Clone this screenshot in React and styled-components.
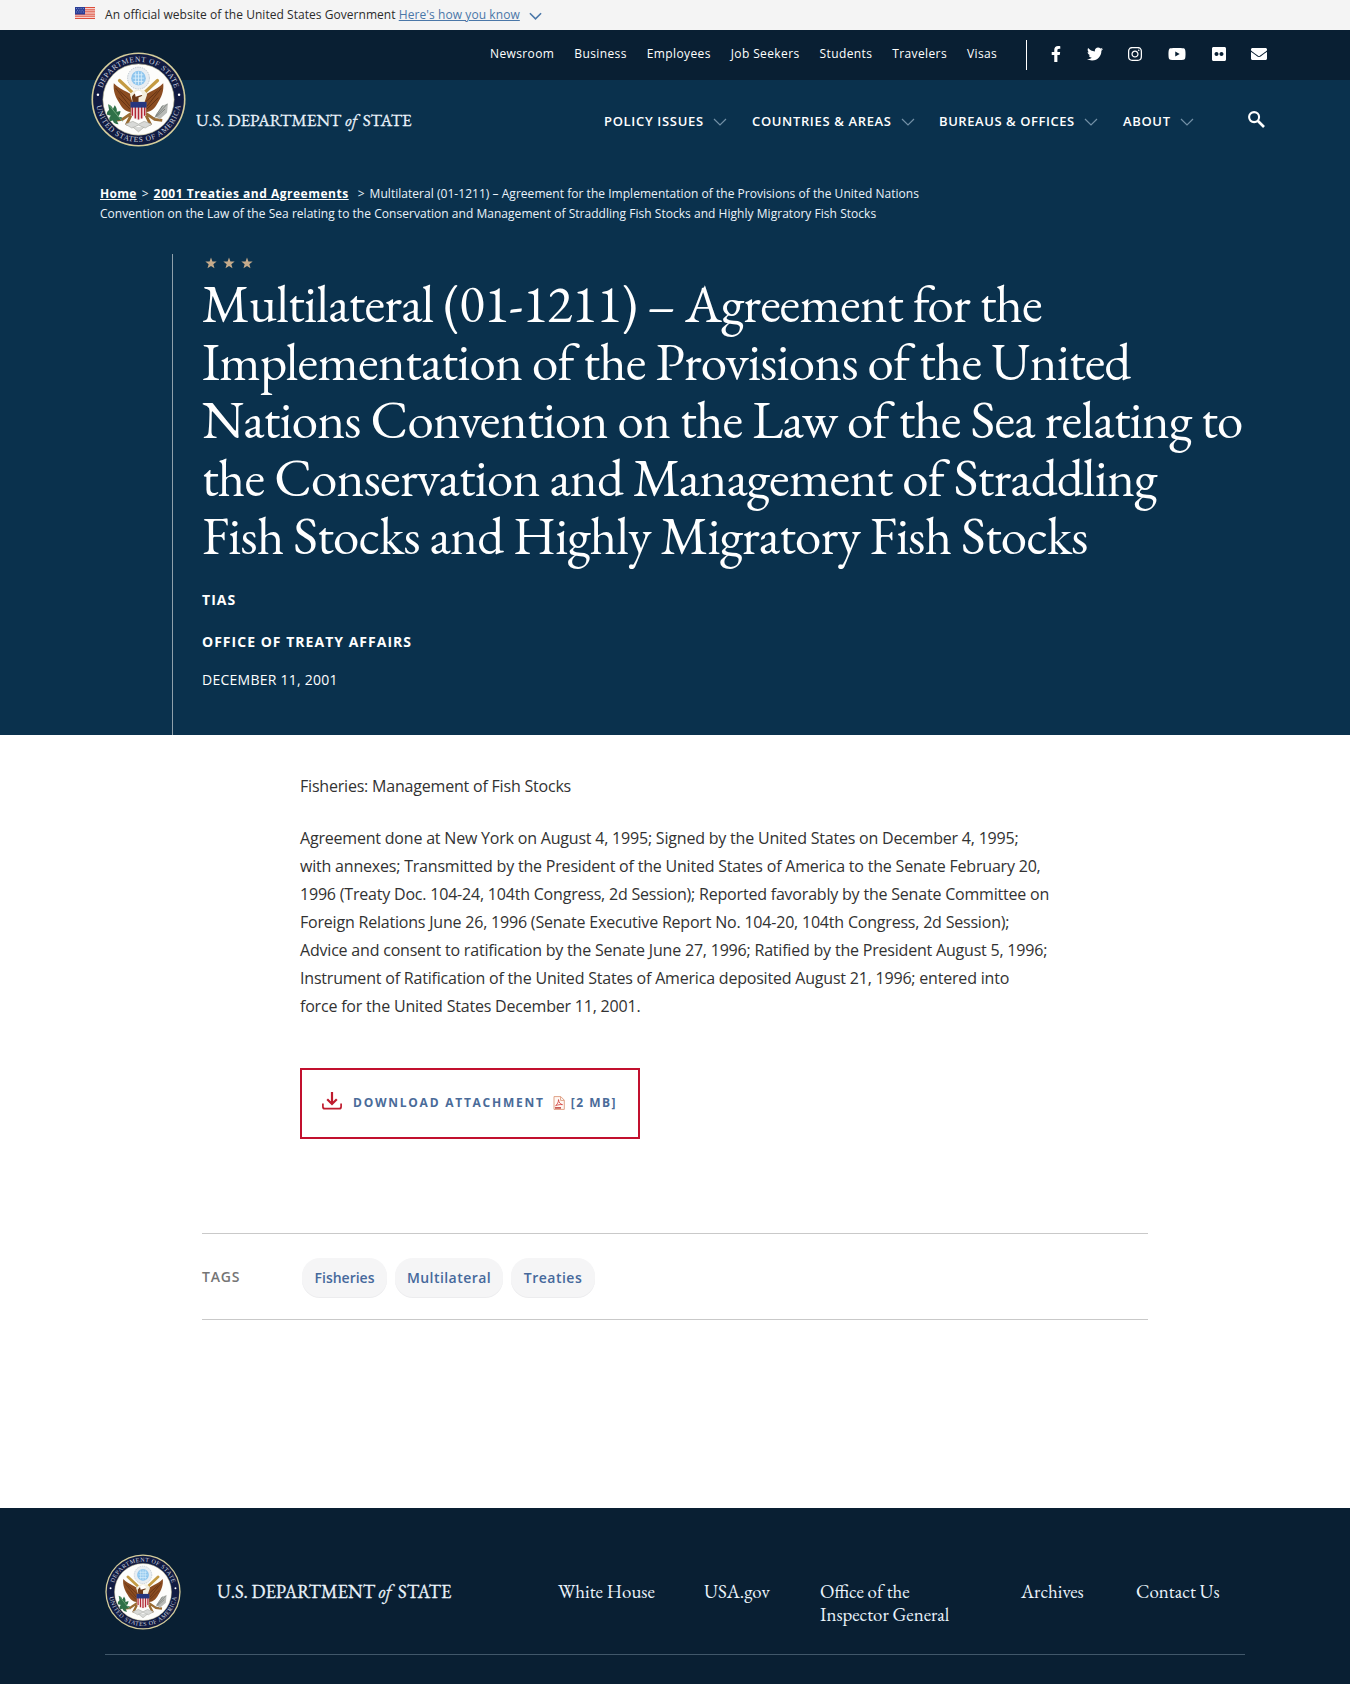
import React from "react";
import styled, { createGlobalStyle, css } from "styled-components";
import { FaFacebookF, FaTwitter, FaInstagram, FaYoutube, FaFlickr, FaEnvelope } from "react-icons/fa";

const sans = '"Open Sans", "Noto Sans", sans-serif';
const serif = '"EB Garamond", "Liberation Serif", serif';

const GlobalStyle = createGlobalStyle`
  * { box-sizing: border-box; }
  body { margin: 0; background: #fff; color: #323232; font-family: ${sans}; }
  a { color: inherit; text-decoration: none; }
  svg { display: block; flex: none; }
`;

const Page = styled.div`
  width: 1350px;
  height: 1684px;
  overflow: hidden;
  display: flex;
  flex-direction: column;
`;

/* Government banner */
const Banner = styled.div`
  height: 30px;
  flex: none;
  padding: 0 75px;
  display: flex;
  background: #f4f4f4;
  font-size: 12px;
  line-height: 29px;
  letter-spacing: 0.04px;
  color: #2b2b2b;
  white-space: pre;
  & > svg:first-child { margin: 7px 10px 0 0; }
  & > svg:last-child { width: 13px; margin: 12px 0 0 9px; }
`;
const BannerLink = styled.a`
  && { color: #4a77a8; text-decoration: underline; letter-spacing: 0.08px; }
`;

/* Header */
const Header = styled.header`
  position: relative;
  flex: none;
  height: 130px;
  display: flex;
  flex-direction: column;
  background: #0a314d;
  color: #fff;
`;
const Utility = styled.div`
  height: 50px;
  padding: 0 0 0 490px;
  display: flex;
  align-items: center;
  background: #091f33;
`;
const UtilityNav = styled.nav`
  display: flex;
  gap: 20px;
  font-size: 12px;
  line-height: 20px;
  letter-spacing: 0.38px;
  white-space: nowrap;
  margin-top: -3px;
`;
const Divider = styled.div`
  width: 1px;
  height: 30px;
  margin: 0 24px 0 29px;
  background: #fff;
`;
const Social = styled.div`
  display: flex;
  gap: 25.6px;
  align-items: center;
  margin-top: -2px;
`;
const SocialLink = styled.a`
  display: flex;
  svg { width: ${(p) => p.$w}px; height: 16px; }
`;
const MainNav = styled.nav`
  height: 80px;
  padding: 0 0 0 604px;
  display: flex;
  align-items: center;
  & > svg { margin-top: -2px; }
`;
const NavItem = styled.a`
  display: flex;
  align-items: center;
  width: ${(p) => p.$w}px;
  font-size: 13px;
  font-weight: 600;
  line-height: 20px;
  letter-spacing: ${(p) => p.$ls}px;
  white-space: nowrap;
  margin-top: 2px;
  svg { margin-left: 9px; margin-top: 1px; }
`;
const Brand = styled.a`
  position: absolute;
  left: 91px;
  top: 22px;
  display: flex;
`;
const Wordmark = styled.div`
  display: flex;
  align-items: baseline;
  font-family: ${serif};
  font-size: ${(p) => p.$size}px;
  line-height: 24px;
  white-space: nowrap;
  color: #eaf3fb;
  -webkit-text-stroke: 0.3px #eaf3fb;
  ${(p) =>
    p.$large
      ? css`width: 341px; margin-left: 36px; margin-top: 0;`
      : css`margin: 56px 0 0 10px;`}
  em { margin: 0 ${(p) => (p.$large ? 6.5 : 5.5)}px 0 ${(p) => (p.$large ? 3.5 : 4)}px; }
`;

/* Hero */
const Hero = styled.section`
  flex: none;
  height: 575px;
  background: #0a314d;
  color: #fff;
`;
const Crumbs = styled.div`
  height: 94px;
  padding: 24px 0 0 100px;
  font-size: 12px;
  line-height: 20px;
  letter-spacing: 0.035px;
  white-space: nowrap;
  color: #eaf3fb;
`;
const CrumbLine = styled.div`
  display: flex;
`;
const Crumb = styled.a`
  && { text-decoration: underline; }
  font-weight: 700;
  letter-spacing: ${(p) => p.$ls}px;
  color: #fff;
`;
const Separator = styled.span`
  margin: 0 5px 0 ${(p) => p.$before}px;
`;
const HeroBody = styled.div`
  height: 481px;
  margin-left: 172px;
  padding: 3px 0 0 29px;
  border-left: 1px solid #8fa0ab;
`;
const Stars = styled.div`
  display: flex;
  gap: 6px;
  height: 18px;
  padding-left: 3px;
`;
const Title = styled.h1`
  margin: 0 0 25px;
  font-family: ${serif};
  font-size: 53px;
  font-weight: 400;
  line-height: 58px;
  letter-spacing: -0.77px;
  white-space: nowrap;
`;
const Meta = styled.div`
  font-size: 14px;
  line-height: 20px;
  font-weight: ${(p) => (p.$bold ? 700 : 400)};
  letter-spacing: ${(p) => (p.$bold ? 1.02 : 0.25)}px;
  margin-bottom: ${(p) => p.$gap}px;
`;

/* Article */
const Article = styled.main`
  flex: none;
  height: 773px;
  padding: 37px 202px 0;
  display: flex;
  flex-direction: column;
`;
const Paragraph = styled.p`
  margin: 0 0 24px 98px;
  font-size: 16px;
  line-height: 28px;
  white-space: nowrap;
  letter-spacing: -0.2px;
  color: #323232;
`;
const Download = styled.a`
  width: 340px;
  height: 71px;
  margin: 24px 0 94px 98px;
  padding: 0 0 2px 20px;
  display: flex;
  align-items: center;
  border: 2px solid #c2102e;
  font-size: 12px;
  font-weight: 700;
  letter-spacing: 1.75px;
  && { color: #4a6b99; }
  svg:first-child { margin-top: -4px; }
  span { margin-left: 11px; }
  span + svg { margin: 0 6px 0 8px; }
  b { letter-spacing: 1.5px; font-weight: 700; }
`;
const TagRow = styled.div`
  height: 87px;
  display: flex;
  align-items: center;
  border-top: 1px solid #c9c9c9;
  border-bottom: 1px solid #c9c9c9;
`;
const TagLabel = styled.div`
  width: 100px;
  font-size: 14px;
  font-weight: 600;
  letter-spacing: 0.8px;
  color: #757575;
`;
const TagList = styled.div`
  display: flex;
  gap: 8px;
  margin-top: 2px;
`;
const Tag = styled.a`
  width: ${(p) => p.$w}px;
  height: 39px;
  padding-bottom: 1px;
  display: flex;
  align-items: center;
  justify-content: center;
  border-radius: 18px;
  background: #f5f5f6;
  box-shadow: 0 1px 0 #ececee;
  font-size: 14px;
  font-weight: 600;
  letter-spacing: ${(p) => p.$ls}px;
  && { color: #46699c; }
`;

/* Footer */
const Footer = styled.footer`
  flex: none;
  height: 176px;
  padding: 46px 105px 0 105px;
  background: #091f33;
  color: #eaf3fb;
`;
const FooterRow = styled.div`
  height: 101px;
  display: flex;
  border-bottom: 1px solid #41576a;
`;
const FooterBrand = styled.div`
  display: flex;
  height: 76px;
  align-items: center;
`;
const FooterLinks = styled.nav`
  display: flex;
  padding-top: 26px;
  font-family: ${serif};
  font-size: 18.9px;
  line-height: 23px;
  white-space: nowrap;
`;
const FooterLink = styled.a`
  width: ${(p) => p.$w}px;
  span { display: block; }
`;

const Flag = () => (
  <svg width="20" height="12" viewBox="0 0 20 12">
    <rect width="20" height="12" fill="#fff" />
    <path d="M0 .7h20M0 2.8h20M0 4.9h20M0 7h20M0 9.1h20M0 11.3h20" stroke="#dc4e3c" strokeWidth="1.25" />
    <rect width="10" height="7.5" fill="#2b3e96" />
    <path d="M1 1.5h8M2 3.3h7M1 5h8" stroke="#98a6dc" strokeWidth=".7" strokeDasharray="1 1.3" />
  </svg>
);

const Chevron = ({ color, width = 1.2 }) => (
  <svg width="14" height="8" viewBox="0 0 14 8">
    <path d="M1 1l6 6 6-6" fill="none" stroke={color} strokeWidth={width} />
  </svg>
);

const SearchIcon = () => (
  <svg width="17" height="17" viewBox="0 0 17 17" fill="none" stroke="#fff">
    <circle cx="6.1" cy="6.1" r="5" strokeWidth="2.1" />
    <path d="M10 10l6 6" strokeWidth="2.6" />
  </svg>
);

const Star = () => (
  <svg width="12" height="12" viewBox="0 0 24 24" fill="#c6ab8b">
    <path d="M12 1l2.900 7.900 8.400.3-6.600 5.200 2.300 8.100-7-4.700-7 4.700 2.300-8.100L.7 9.200l8.400-.3z" />
  </svg>
);

const DownloadIcon = () => (
  <svg width="20" height="18" viewBox="0 0 20 18" fill="none" stroke="#bf1b2e" strokeWidth="2.2">
    <path d="M10 0v12M5.2 7.2L10 12l4.800-4.800" />
    <path d="M.9 11.500v3.200q0 2 2 2h14.200q2 0 2-2v-3.200" strokeWidth="1.700" />
  </svg>
);

const PdfIcon = () => (
  <svg width="12" height="14" viewBox="0 0 12 14" fill="none">
    <path d="M1 .6h6.800l3.500 3.600v9.200H1zM7.600.8v3.600h3.600" stroke="#e0a287" fill="#fff8f3" />
    <path d="M2.600 9.600c1.600-1 3-3.600 2.900-6 .2 2.800 2 4.900 4 5-2.500-.2-4.500.2-6.900 1z" stroke="#cf3a37" strokeWidth=".8" />
    <path d="M2 11.900h6" stroke="#c44a42" strokeWidth="1.600" />
  </svg>
);

function Seal({ size, id }) {
  return (
    <svg width={size} height={size} viewBox="0 0 100 100">
      <defs>
        <path id={`${id}-top`} d="M10.200 50a39.800 39.800 0 0 1 79.600 0" />
        <path id={`${id}-bottom`} d="M5.300 50a44.700 44.700 0 0 0 89.400 0" />
      </defs>
      <circle cx="50" cy="50" r="49.500" fill="#d5cd9b" />
      <circle cx="50" cy="50" r="47.800" fill="#111b42" />
      <circle cx="50" cy="50" r="37.500" fill="#fdfdfb" stroke="#b9b48c" strokeWidth=".6" />
      <g fill="#c9d0df" fontFamily='"Liberation Serif", serif' fontSize="8" textAnchor="middle">
        <text textLength="101"><textPath href={`#${id}-top`} startOffset="50%">DEPARTMENT OF STATE</textPath></text>
        <text textLength="127"><textPath href={`#${id}-bottom`} startOffset="50%">UNITED STATES OF AMERICA</textPath></text>
      </g>
      <g fill="#fff"><circle cx="7.300" cy="45" r="1.300" /><circle cx="92.700" cy="45" r="1.300" /></g>
      <circle cx="50" cy="27.500" r="11.500" fill="#e9eef2" stroke="#aebac4" strokeWidth=".8" strokeDasharray="1.500 1" />
      <circle cx="50" cy="27.500" r="7.700" fill="#8fc6ee" />
      <path d="M45 24h10M44 27.500h12M45 31h10M47 21.500v12M50 20.500v14M53 21.500v12" stroke="#d9effc" strokeWidth=".9" />
      <path d="M30 30l14 13M70 30L56 43" stroke="#c49b43" strokeWidth="3.400" strokeLinecap="round" />
      <path d="M24 33c4 4 9 7 14 9 4 2 7 4 8 8l-3 13c-5 1-10-3-13-9-4-6-7-13-6-21z" fill="#8b4c20" />
      <path d="M76 33c-4 4-9 7-14 9-4 2-7 4-8 8l3 13c5 1 10-3 13-9 4-6 7-13 6-21z" fill="#8b4c20" />
      <path d="M26 38l15 19M30 41l12 11M74 38L59 57M70 41L58 52M29 48l12 12M71 48L59 60" stroke="#5d2f13" strokeWidth=".9" />
      <path d="M43 64l-10 7-8 1M57 64l10 7 8 1M42 67l-5 10M58 67l5 10" stroke="#9a6b32" strokeWidth="3" fill="none" />
      <path d="M41 45q4-6 10-5 6-1 8 5l-3 9H44z" fill="#f3efdf" />
      <path d="M43 47q3-5 8-4l3 3-4 2v6h-6z" fill="#6b3918" />
      <path d="M46 43q3-4 7-1l1 3-7 2z" fill="#fff" />
      <path d="M42 53h16v12q0 4-8 7-8-3-8-7z" fill="#f6f2ef" />
      <path d="M43.500 57v10M46.700 57v13M50 57v14M53.300 57v13M56.500 57v10" stroke="#b22734" strokeWidth="1.700" />
      <path d="M41.500 52.500h17v6h-17z" fill="#26377f" />
      <path d="M36 76l8-3 6 3 6-3 8 3-7 4-7-3-7 3zM44 79l6 5 6-5" fill="#d8d9d7" stroke="#a9aaa5" strokeWidth=".7" />
      <path d="M18 55q4 1 5 5l2-4q3 4 2 7l4-1q0 4-3 6l5 1q-2 4-6 3l2 4q-5 0-6-4l-3 1q-2-4 1-6l-4-1q-1-3 2-5z" fill="#2f7148" />
      <path d="M19 56l14 17" stroke="#72a97a" strokeWidth="1" />
      <path d="M74 57l7-3-1 10-8 7-4-4z" fill="#b8bab6" />
      <path d="M80 55L66 70M78 60l-10 9M76 56l-8 11" stroke="#777d78" strokeWidth=".9" />
    </svg>
  );
}

const utilityLinks = ["Newsroom", "Business", "Employees", "Job Seekers", "Students", "Travelers", "Visas"];
const socialLinks = [
  [FaFacebookF, 10], [FaTwitter, 16], [FaInstagram, 14],
  [FaYoutube, 18], [FaFlickr, 14], [FaEnvelope, 16],
];
const navItems = [
  ["POLICY ISSUES", 148, 0.68],
  ["COUNTRIES & AREAS", 187, 0.65],
  ["BUREAUS & OFFICES", 184, 0.56],
  ["ABOUT", 125, 0.65],
];
const tags = [["Fisheries", 85, 0], ["Multilateral", 108, 0.45], ["Treaties", 84, 0.5]];
const footerLinks = [
  [["White House"], 146],
  [["USA.gov"], 116],
  [["Office of the", "Inspector General"], 201],
  [["Archives"], 115],
  [["Contact Us"], 90],
];

export default function App() {
  return (
    <Page>
      <GlobalStyle />
      <Banner>
        <Flag />
        <span>An official website of the United States Government </span>
        <BannerLink href="#">Here's how you know</BannerLink>
        <Chevron color="#4a77a8" width={1.7} />
      </Banner>
      <Header>
        <Utility>
          <UtilityNav>
            {utilityLinks.map((label) => <a href="#" key={label}>{label}</a>)}
          </UtilityNav>
          <Divider />
          <Social>
            {socialLinks.map(([Icon, w], i) => <SocialLink href="#" key={i} $w={w}><Icon /></SocialLink>)}
          </Social>
        </Utility>
        <MainNav>
          {navItems.map(([label, w, ls]) => (
            <NavItem href="#" key={label} $w={w} $ls={ls}>{label}<Chevron color="#7390a6" /></NavItem>
          ))}
          <SearchIcon />
        </MainNav>
        <Brand href="#">
          <Seal size={95} id="header-seal" />
          <Wordmark $size={17}>U.S. DEPARTMENT<em>of</em>STATE</Wordmark>
        </Brand>
      </Header>
      <Hero>
        <Crumbs>
          <CrumbLine>
            <Crumb href="#" $ls={0.3}>Home</Crumb>
            <Separator $before={5}>&gt;</Separator>
            <Crumb href="#" $ls={0.51}>2001 Treaties and Agreements</Crumb>
            <Separator $before={9}>&gt;</Separator>
            Multilateral (01-1211) – Agreement for the Implementation of the Provisions of the United Nations
          </CrumbLine>
          <CrumbLine>
            Convention on the Law of the Sea relating to the Conservation and Management of Straddling Fish Stocks and Highly Migratory Fish Stocks
          </CrumbLine>
        </Crumbs>
        <HeroBody>
          <Stars><Star /><Star /><Star /></Stars>
          <Title>
            Multilateral (01-1211) – Agreement for the<br />
            Implementation of the Provisions of the United<br />
            Nations Convention on the Law of the Sea relating to<br />
            the Conservation and Management of Straddling<br />
            Fish Stocks and Highly Migratory Fish Stocks
          </Title>
          <Meta $bold $gap={22}>TIAS</Meta>
          <Meta $bold $gap={18}>OFFICE OF TREATY AFFAIRS</Meta>
          <Meta>DECEMBER 11, 2001</Meta>
        </HeroBody>
      </Hero>
      <Article>
        <Paragraph>Fisheries: Management of Fish Stocks</Paragraph>
        <Paragraph>
          Agreement done at New York on August 4, 1995; Signed by the United States on December 4, 1995;<br />
          with annexes; Transmitted by the President of the United States of America to the Senate February 20,<br />
          1996 (Treaty Doc. 104-24, 104th Congress, 2d Session); Reported favorably by the Senate Committee on<br />
          Foreign Relations June 26, 1996 (Senate Executive Report No. 104-20, 104th Congress, 2d Session);<br />
          Advice and consent to ratification by the Senate June 27, 1996; Ratified by the President August 5, 1996;<br />
          Instrument of Ratification of the United States of America deposited August 21, 1996; entered into<br />
          force for the United States December 11, 2001.
        </Paragraph>
        <Download href="#">
          <DownloadIcon />
          <span>DOWNLOAD ATTACHMENT</span>
          <PdfIcon />
          <b>[2 MB]</b>
        </Download>
        <TagRow>
          <TagLabel>TAGS</TagLabel>
          <TagList>
            {tags.map(([label, w, ls]) => <Tag href="#" key={label} $w={w} $ls={ls}>{label}</Tag>)}
          </TagList>
        </TagRow>
      </Article>
      <Footer>
        <FooterRow>
          <FooterBrand>
            <Seal size={76} id="footer-seal" />
            <Wordmark $size={18.5} $large>U.S. DEPARTMENT<em>of</em>STATE</Wordmark>
          </FooterBrand>
          <FooterLinks>
            {footerLinks.map(([lines, w]) => (
              <FooterLink href="#" key={lines[0]} $w={w}>
                {lines.map((line) => <span key={line}>{line}</span>)}
              </FooterLink>
            ))}
          </FooterLinks>
        </FooterRow>
      </Footer>
    </Page>
  );
}
